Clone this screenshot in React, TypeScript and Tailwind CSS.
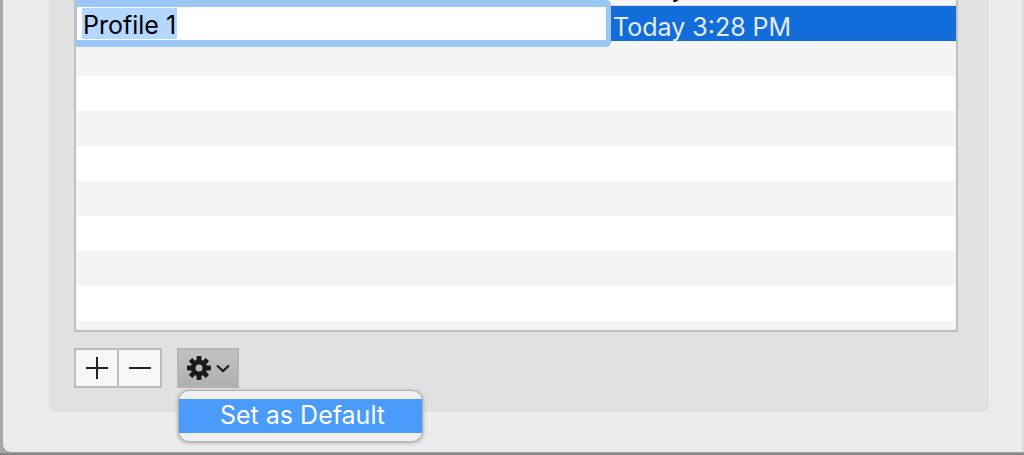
const font = { fontFamily: 'Inter, sans-serif' }

function GearIcon() {
    const teeth = [0, 45, 90, 135, 180, 225, 270, 315]
    return (
        <svg width="26" height="26" viewBox="0 0 26 26" fill="#1a1a1a">
            {teeth.map((deg) => (
                <rect key={deg} x="10.6" y="1" width="4.8" height="6" rx="0.8" transform={`rotate(${deg} 13 13)`} />
            ))}
            <path
                fillRule="evenodd"
                d="M13 4.8a8.2 8.2 0 1 0 0 16.4 8.2 8.2 0 0 0 0-16.4Zm0 4.7a3.5 3.5 0 1 1 0 7 3.5 3.5 0 0 1 0-7Z"
            />
        </svg>
    )
}

function Chevron() {
    return (
        <svg width="14" height="9" viewBox="0 0 14 9" fill="none" stroke="#1a1a1a" strokeWidth="2.2">
            <path d="M1 1.5 7 7l6-5.5" />
        </svg>
    )
}

export default function App() {
    const rows = ['bg-[#f4f4f4]', 'bg-white', 'bg-[#f4f4f4]', 'bg-white', 'bg-[#f4f4f4]', 'bg-white', 'bg-[#f4f4f4]', 'bg-white', 'bg-[#f4f4f4]']

    return (
        <div className="h-[455px] w-[1024px] overflow-hidden bg-[#a8a8a8]">
            <div className="ml-[3px] h-[452px] w-[1021px] rounded-bl-[8px] border-r-2 border-[#dcdcdc] bg-[#ececec] pl-[46px]">
                <div className="relative h-[412px] w-[940px] rounded-b-[6px] bg-[#e1e1e1] pl-[25px]">
                    <div className="h-[332px] w-[884px] overflow-hidden border-r-2 border-b-2 border-l-2 border-[#c0c0c0] bg-white">
                        {/* Row above, scrolled almost out of view */}
                        <div className="h-[6px] overflow-hidden border-b border-[#dcdcdc] bg-[#f8f8f8] pl-[537px]">
                            <div className="-mt-[31px] text-[25px] leading-[38px] whitespace-nowrap text-black" style={font}>
                                Today 3:21 PM
                            </div>
                        </div>
                        <div className="relative flex h-[35px] bg-[#126cd9] pl-[535px]">
                            <span className="pl-[2px] text-[25px] leading-[42px] whitespace-nowrap text-[#e4edf9]" style={font}>
                                Today 3:28 PM
                            </span>
                            {/* Name field being edited */}
                            <div className="absolute top-[-6px] left-0 flex h-[47px] w-[535px] items-center rounded-r-[5px] rounded-bl-[2px] border-t-[7px] border-r-[5px] border-b-[7px] border-l border-[#9bc7f6] bg-white pl-[5px]">
                                <span className="inline-block h-[31px] bg-[#b3d7ff] px-[1px] text-[25px] leading-[35px] text-black" style={font}>
                                    Profile 1
                                </span>
                            </div>
                        </div>
                        {rows.map((row, index) => (
                            <div key={index} className={`h-[35px] ${row}`}></div>
                        ))}
                    </div>

                    <div className="mt-[16px] flex">
                        <div className="flex h-[40px] border-2 border-[#bcbcbc]">
                            <button className="flex w-[41px] items-center justify-center bg-[#f7f7f7]">
                                <span className="relative block h-[22px] w-[22px]">
                                    <span className="absolute top-[10px] left-0 h-[2px] w-[22px] bg-[#222]"></span>
                                    <span className="absolute top-0 left-[10px] h-[22px] w-[2px] bg-[#222]"></span>
                                </span>
                            </button>
                            <div className="w-[2px] bg-[#bcbcbc]"></div>
                            <button className="flex w-[41px] items-center justify-center bg-[#f7f7f7]">
                                <span className="block h-[2px] w-[22px] bg-[#222]"></span>
                            </button>
                        </div>
                        <button className="ml-[15px] flex h-[40px] w-[62px] items-center gap-[4px] border-2 border-[#b4b4b4] bg-gradient-to-b from-[#c2c2c2] to-[#b0b0b0] pl-[7px]">
                            <GearIcon />
                            <Chevron />
                        </button>
                    </div>

                    {/* Popup menu */}
                    <div className="absolute top-[390px] left-[129px] z-10 h-[52px] w-[245px] rounded-[11px] border border-[#b0b0b0] bg-[#f0f0f0] py-[8px] shadow-[0_1px_4px_rgba(0,0,0,0.3)]">
                        <div className="h-[34px] bg-[#4a9bfb] pl-[41px] text-[25px] leading-[33px] text-white" style={font}>
                            Set as Default
                        </div>
                    </div>
                </div>
            </div>
            <div className="h-[3px] bg-gradient-to-b from-[#a8a8a8] to-[#777777]"></div>
        </div>
    )
}
